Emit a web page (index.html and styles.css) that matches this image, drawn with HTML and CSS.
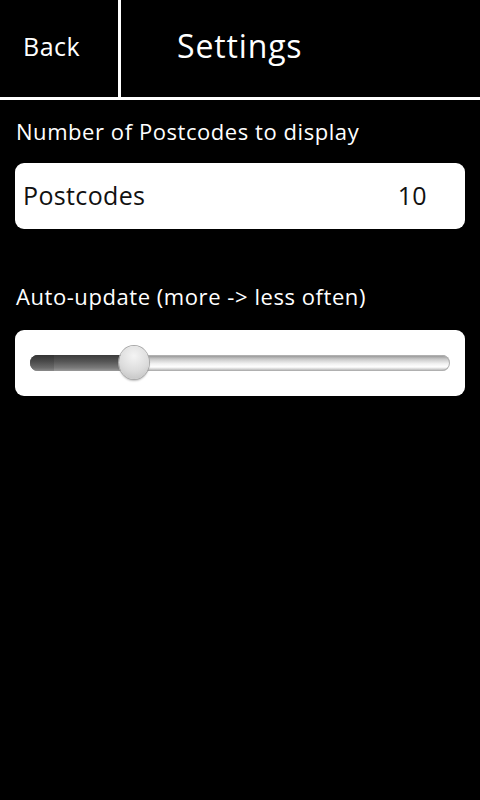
FILE: index.html
```html
<!DOCTYPE html>
<html lang="en">
<head>
<meta charset="utf-8">
<title>Settings</title>
<link rel="stylesheet" href="styles.css">
</head>
<body>
<header class="topbar">
  <div class="back">Back</div>
  <div class="title">Settings</div>
</header>
<main class="content">
  <div class="label">Number of Postcodes to display</div>
  <div class="panel row">
    <span class="row-name">Postcodes</span>
    <span class="row-value">10</span>
  </div>
  <div class="label label-gap">Auto-update (more -&gt; less often)</div>
  <div class="panel">
    <div class="seek">
      <div class="seek-secondary"></div>
      <div class="seek-progress" style="width: 24.8%"></div>
      <div class="seek-thumb" style="left: 24.8%"></div>
    </div>
  </div>
</main>
</body>
</html>
```

FILE: styles.css
```css
html, body {
  margin: 0;
  padding: 0;
  background: #000;
  color: #fff;
  font-family: "Open Sans", "Noto Sans", sans-serif;
}

body {
  width: 480px;
  height: 800px;
  overflow: hidden;
}

.topbar {
  display: flex;
  height: 97px;
  border-bottom: 3px solid #fff;
}

.back {
  width: 95px;
  padding-left: 23px;
  padding-bottom: 5px;
  box-sizing: content-box;
  display: flex;
  align-items: center;
  font-size: 25px;
  letter-spacing: 0.5px;
  border-right: 3px solid #fff;
}

.title {
  padding-left: 56px;
  display: flex;
  align-items: center;
  font-size: 32px;
  letter-spacing: 0.85px;
  padding-bottom: 6px;
}

.content {
  padding: 0 15px;
}

.label {
  font-size: 22px;
  letter-spacing: 0.56px;
  line-height: 30px;
  padding-left: 1px;
  margin-top: 16px;
  margin-bottom: 17px;
}

.label-gap {
  margin-top: 52px;
  margin-bottom: 19px;
}

.panel {
  background: #fff;
  border-radius: 9px;
  height: 66px;
  box-sizing: border-box;
}

.row {
  display: flex;
  align-items: center;
  justify-content: space-between;
  color: #111;
  font-size: 25px;
  letter-spacing: 0.35px;
  padding: 0 38px 3px 8px;
}

.seek {
  position: relative;
  top: 25px;
  margin: 0 15px;
  height: 16px;
  border-radius: 8px;
  background: linear-gradient(#8c8c8c 0%, #c8c8c8 25%, #f2f2f2 55%, #ffffff 75%, #a8a8a8 100%);
  box-shadow: inset 0 0 0 1px #b0b0b0;
}

.seek-progress {
  position: absolute;
  left: 0;
  top: 0;
  bottom: 0;
  border-radius: 8px 0 0 8px;
  background: linear-gradient(#3c3c3c 0%, #555 40%, #7a7a7a 80%, #9a9a9a 100%);
  z-index: 0;
}

.seek-secondary {
  position: absolute;
  left: 0;
  top: 0;
  bottom: 0;
  width: 24px;
  border-radius: 8px 0 0 8px;
  background: linear-gradient(#333 0%, #4a4a4a 40%, #6a6a6a 80%, #8a8a8a 100%);
  z-index: 1;
}

.seek-thumb {
  position: absolute;
  top: -9px;
  width: 30px;
  height: 33px;
  margin-left: -15px;
  border-radius: 50%;
  background: radial-gradient(circle at 50% 30%, #f4f4f4 0%, #dcdcdc 55%, #bdbdbd 100%);
  box-shadow: 0 0 0 1px #a9a9a9, 0 2px 2px rgba(0, 0, 0, 0.25);
  z-index: 2;
}
```
